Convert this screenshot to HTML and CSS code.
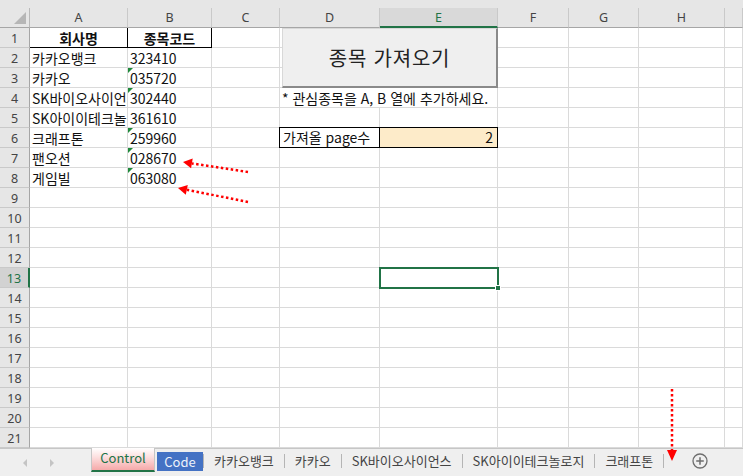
FILE: index.html
```html
<!DOCTYPE html>
<html lang="ko">
<head>
<meta charset="utf-8">
<title>Excel</title>
<link rel="stylesheet" href="styles.css">
</head>
<body>
<div class="topband"></div>
<div class="sheet">
  <div class="corner"><span class="tri"></span></div>
  <div class="ch">A</div><div class="ch">B</div><div class="ch">C</div><div class="ch">D</div><div class="ch ch-sel">E</div><div class="ch">F</div><div class="ch">G</div><div class="ch">H</div><div class="ch"></div>

  <div class="rh">1</div><div class="c hdr box">회사명</div><div class="c hdr box">종목코드</div><div class="c"></div><div class="c"></div><div class="c"></div><div class="c"></div><div class="c"></div><div class="c"></div><div class="c"></div>
  <div class="rh">2</div><div class="c">카카오뱅크</div><div class="c">323410</div><div class="c"></div><div class="c"></div><div class="c"></div><div class="c"></div><div class="c"></div><div class="c"></div><div class="c"></div>
  <div class="rh">3</div><div class="c">카카오</div><div class="c txtnum">035720</div><div class="c"></div><div class="c"></div><div class="c"></div><div class="c"></div><div class="c"></div><div class="c"></div><div class="c"></div>
  <div class="rh">4</div><div class="c">SK바이오사이언스</div><div class="c txtnum">302440</div><div class="c"></div><div class="c note">* 관심종목을 A, B 열에 추가하세요.</div><div class="c"></div><div class="c"></div><div class="c"></div><div class="c"></div>
  <div class="rh">5</div><div class="c">SK아이이테크놀로지</div><div class="c">361610</div><div class="c"></div><div class="c"></div><div class="c"></div><div class="c"></div><div class="c"></div><div class="c"></div><div class="c"></div>
  <div class="rh">6</div><div class="c">크래프톤</div><div class="c txtnum">259960</div><div class="c"></div><div class="c input-label">가져올 page수</div><div class="c input-val">2</div><div class="c"></div><div class="c"></div><div class="c"></div><div class="c"></div>
  <div class="rh">7</div><div class="c">팬오션</div><div class="c txtnum">028670</div><div class="c"></div><div class="c"></div><div class="c"></div><div class="c"></div><div class="c"></div><div class="c"></div><div class="c"></div>
  <div class="rh">8</div><div class="c">게임빌</div><div class="c txtnum">063080</div><div class="c"></div><div class="c"></div><div class="c"></div><div class="c"></div><div class="c"></div><div class="c"></div><div class="c"></div>
  <div class="rh">9</div><div class="c"></div><div class="c"></div><div class="c"></div><div class="c"></div><div class="c"></div><div class="c"></div><div class="c"></div><div class="c"></div><div class="c"></div>
  <div class="rh">10</div><div class="c"></div><div class="c"></div><div class="c"></div><div class="c"></div><div class="c"></div><div class="c"></div><div class="c"></div><div class="c"></div><div class="c"></div>
  <div class="rh">11</div><div class="c"></div><div class="c"></div><div class="c"></div><div class="c"></div><div class="c"></div><div class="c"></div><div class="c"></div><div class="c"></div><div class="c"></div>
  <div class="rh">12</div><div class="c"></div><div class="c"></div><div class="c"></div><div class="c"></div><div class="c"></div><div class="c"></div><div class="c"></div><div class="c"></div><div class="c"></div>
  <div class="rh rh-sel">13</div><div class="c"></div><div class="c"></div><div class="c"></div><div class="c"></div><div class="c sel"><span class="handle"></span></div><div class="c"></div><div class="c"></div><div class="c"></div><div class="c"></div>
  <div class="rh">14</div><div class="c"></div><div class="c"></div><div class="c"></div><div class="c"></div><div class="c"></div><div class="c"></div><div class="c"></div><div class="c"></div><div class="c"></div>
  <div class="rh">15</div><div class="c"></div><div class="c"></div><div class="c"></div><div class="c"></div><div class="c"></div><div class="c"></div><div class="c"></div><div class="c"></div><div class="c"></div>
  <div class="rh">16</div><div class="c"></div><div class="c"></div><div class="c"></div><div class="c"></div><div class="c"></div><div class="c"></div><div class="c"></div><div class="c"></div><div class="c"></div>
  <div class="rh">17</div><div class="c"></div><div class="c"></div><div class="c"></div><div class="c"></div><div class="c"></div><div class="c"></div><div class="c"></div><div class="c"></div><div class="c"></div>
  <div class="rh">18</div><div class="c"></div><div class="c"></div><div class="c"></div><div class="c"></div><div class="c"></div><div class="c"></div><div class="c"></div><div class="c"></div><div class="c"></div>
  <div class="rh">19</div><div class="c"></div><div class="c"></div><div class="c"></div><div class="c"></div><div class="c"></div><div class="c"></div><div class="c"></div><div class="c"></div><div class="c"></div>
  <div class="rh">20</div><div class="c"></div><div class="c"></div><div class="c"></div><div class="c"></div><div class="c"></div><div class="c"></div><div class="c"></div><div class="c"></div><div class="c"></div>
  <div class="rh">21</div><div class="c"></div><div class="c"></div><div class="c"></div><div class="c"></div><div class="c"></div><div class="c"></div><div class="c"></div><div class="c"></div><div class="c"></div>

  <button class="fetch-btn">종목 가져오기</button>
</div>

<div class="tabbar">
  <div class="nav">
    <svg width="8" height="10" viewBox="0 0 8 10"><path d="M6 1 L2 5 L6 9 Z" fill="#c4c4c4"/></svg>
    <svg width="8" height="10" viewBox="0 0 8 10"><path d="M2 1 L6 5 L2 9 Z" fill="#c4c4c4"/></svg>
  </div>
  <div class="tab tab-control">Control</div>
  <div class="tab tab-code">Code</div>
  <span class="sep"></span>
  <div class="tab">카카오뱅크</div>
  <span class="sep"></span>
  <div class="tab">카카오</div>
  <span class="sep"></span>
  <div class="tab">SK바이오사이언스</div>
  <span class="sep"></span>
  <div class="tab">SK아이이테크놀로지</div>
  <span class="sep"></span>
  <div class="tab">크래프톤</div>
  <span class="sep"></span>
  <div class="add">
    <svg width="16" height="16" viewBox="0 0 16 16"><circle cx="8" cy="8" r="7" fill="none" stroke="#6e6e6e" stroke-width="1.3"/><path d="M8 4.2 V11.8 M4.2 8 H11.8" stroke="#6e6e6e" stroke-width="1.5"/></svg>
  </div>
</div>

<svg class="annot" width="743" height="476" viewBox="0 0 743 476">
  <g stroke="#ff0000" stroke-width="2.5" stroke-dasharray="2.5 2.5" fill="none">
    <path d="M248 172 L192 163.4"/>
    <path d="M248 202 L187 189.8"/>
    <path d="M672 389 L672 451"/>
  </g>
  <g fill="#ff0000">
    <polygon points="183,162 192.7,158.5 191.1,168.3"/>
    <polygon points="178,188 187.8,184.9 185.8,194.7"/>
    <polygon points="672,461 667,450 677,450"/>
  </g>
</svg>
</body>
</html>
```

FILE: styles.css
```css
* { box-sizing: border-box; }
html, body { margin: 0; padding: 0; }
body {
  width: 743px;
  height: 476px;
  overflow: hidden;
  position: relative;
  background: #ffffff;
  font-family: "Noto Sans CJK KR", "Noto Sans", sans-serif;
}
.topband { height: 8px; background: #e6e6e6; }

.sheet {
  position: relative;
  display: grid;
  grid-template-columns: 30px 98px 84px 68px 100px 118px 71px 70px 86px 1fr;
  grid-auto-rows: 20px;
}
.corner {
  background: #e6e6e6;
  border-right: 1px solid #b9b9b9;
  border-bottom: 1px solid #a6a6a6;
  position: relative;
}
.corner .tri {
  position: absolute;
  right: 3px;
  bottom: 3px;
  width: 0; height: 0;
  border-left: 12px solid transparent;
  border-bottom: 12px solid #b6b6b6;
}
.ch {
  background: #e6e6e6;
  border-right: 1px solid #c9c9c9;
  border-bottom: 1px solid #a6a6a6;
  font-family: "Noto Sans", "Liberation Sans", sans-serif;
  font-size: 12.5px;
  color: #444;
  text-align: center;
  line-height: 20px;
}
.ch-sel {
  background: #d9d9d9;
  color: #217346;
  border-bottom: 2px solid #217346;
}
.rh {
  background: #e6e6e6;
  border-right: 1px solid #a6a6a6;
  border-bottom: 1px solid #c9c9c9;
  font-family: "Noto Sans", "Liberation Sans", sans-serif;
  font-size: 12.5px;
  color: #444;
  text-align: center;
  line-height: 21px;
}
.rh-sel {
  background: #d2d2d2;
  color: #217346;
  border-right: 2px solid #217346;
}
.c {
  position: relative;
  border-right: 1px solid #dadada;
  border-bottom: 1px solid #dadada;
  font-size: 14px;
  line-height: 20px;
  padding: 0 2px;
  color: #111;
  white-space: nowrap;
  overflow: hidden;
}
.hdr {
  font-weight: bold;
  text-align: center;
}
.box {
  border-right: 1px solid #000;
  border-bottom: 1px solid #000;
}
.txtnum::before {
  content: "";
  position: absolute;
  left: 0; top: 0;
  width: 0; height: 0;
  border-top: 5px solid #1f8a3b;
  border-right: 5px solid transparent;
}
.note {
  grid-column: span 2;
  overflow: visible;
}
.input-label {
  border: 1px solid #000;
  margin-top: -1px;
  margin-left: -1px;
  padding-left: 3px;
  line-height: 19px;
}
.input-val {
  background: #fdebc9;
  border-top: 1px solid #000;
  border-bottom: 1px solid #000;
  border-right: 1px solid #000;
  margin-top: -1px;
  text-align: right;
  padding-right: 4px;
  line-height: 19px;
}
.sel {
  overflow: visible;
  outline: 2px solid #217346;
  outline-offset: -1px;
  z-index: 2;
}
.handle {
  position: absolute;
  right: -4px;
  bottom: -4px;
  width: 6px;
  height: 6px;
  background: #217346;
  border: 1px solid #fff;
}
.fetch-btn {
  position: absolute;
  left: 282px;
  top: 20px;
  width: 216px;
  height: 60px;
  margin: 0;
  padding: 0;
  background: #efefef;
  border: 1px solid #d8d8d8;
  border-right: 2px solid #8a8a8a;
  border-bottom: 2px solid #8a8a8a;
  font-family: "Noto Sans CJK KR", sans-serif;
  font-size: 20px;
  color: #222;
  letter-spacing: 0.8px;
}

.tabbar {
  position: absolute;
  left: 0; right: 0; bottom: 0;
  height: 28px;
  background: #efefef;
  border-top: 1px solid #c6c6c6;
  display: flex;
  align-items: stretch;
  font-family: "Noto Sans CJK KR", sans-serif;
  font-size: 13px;
  color: #444;
}
.nav {
  width: 91px;
  display: flex;
  align-items: center;
  gap: 19px;
  padding-left: 21px;
}
.tab {
  display: flex;
  align-items: center;
  padding: 0 10px 4px;
  white-space: nowrap;
}
.tab-control {
  width: 64px;
  justify-content: center;
  padding: 0 0 3px;
  margin-top: -1px;
  color: #217346;
  background: linear-gradient(#ffffff 0%, #fde0e0 40%, #f5a9a9 100%);
  border-left: 1px solid #c6c6c6;
  border-right: 1px solid #c6c6c6;
  border-bottom: 2px solid #217346;
  margin-bottom: 4px;
}
.tab-code {
  width: 46px;
  margin: 3px 0 5px 2px;
  padding: 0 0 1px;
  justify-content: center;
  background: #4472c4;
  color: #eef2fa;
}
.sep {
  width: 1px;
  background: #b5b5b5;
  margin: 5px 0 8px;
}
.add {
  display: flex;
  align-items: center;
  padding: 0 0 4px 28px;
}
.annot {
  position: absolute;
  left: 0; top: 0;
  pointer-events: none;
}
```
